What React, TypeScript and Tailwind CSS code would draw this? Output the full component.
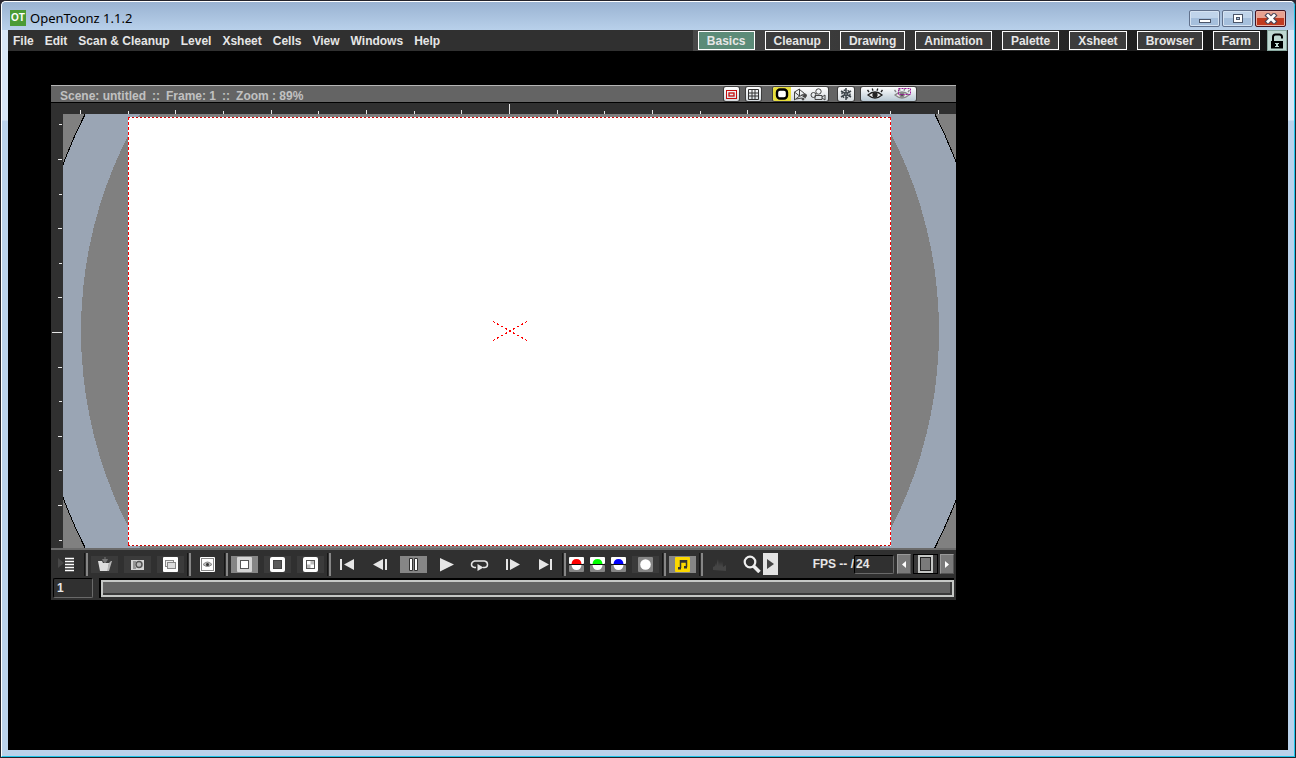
import React from "react";

const menus = ["File", "Edit", "Scan & Cleanup", "Level", "Xsheet", "Cells", "View", "Windows", "Help"];
const rooms = ["Basics", "Cleanup", "Drawing", "Animation", "Palette", "Xsheet", "Browser", "Farm"];
const sceneInfo = ["Scene: untitled", "::", "Frame: 1", "::", "Zoom : 89%"];

function Logo() {
  return (
    <span className="grid size-4 place-items-center overflow-hidden bg-[#4b9b35] font-['Liberation_Sans',sans-serif] text-[10px] leading-4 font-bold text-white">
      OT
    </span>
  );
}

function WindowButton({ label, close, children }: { label: string; close?: boolean; children: React.ReactNode }) {
  return (
    <button
      aria-label={label}
      className={
        close
          ? "grid h-[17px] w-[31px] place-items-center rounded-[2px] border border-[#431422] bg-linear-to-b from-[#e8a191] from-50% to-[#c03a20] to-50% shadow-[inset_0_0_0_1px_#e9b0a4]"
          : "grid h-[17px] w-[31px] place-items-center rounded-[2px] border border-[#61718c] bg-linear-to-b from-[#c0d4ea] from-50% to-[#a5bfdc] to-50% shadow-[inset_0_0_0_1px_#d5e3f2]"
      }
    >
      <svg width="14" height="11" viewBox="0 0 14 11">
        {children}
      </svg>
    </button>
  );
}

function TitleBar() {
  return (
    <header className="flex h-[28px] shrink-0 items-start bg-linear-to-b from-[#9ab3d2] to-[#b8d0ea] pr-2 pl-2">
      <div className="flex items-center gap-1 pt-2">
        <Logo />
        <h1 className="font-['Noto_Sans',sans-serif] text-[13px] leading-4 text-black">OpenToonz 1.1.2</h1>
      </div>
      <div className="ml-auto flex gap-[2px] pt-2">
        <WindowButton label="Minimize">
          <rect x="1.5" y="6.5" width="11" height="3" fill="#fff" stroke="#4b5568" />
        </WindowButton>
        <WindowButton label="Maximize">
          <rect x="2.5" y="1.5" width="9" height="8" fill="#fff" stroke="#4b5568" />
          <rect x="5.5" y="4.5" width="3" height="2" fill="#a8bfdb" stroke="#4b5568" />
        </WindowButton>
        <WindowButton label="Close" close>
          <path d="M4 2.500l6 6M10 2.500l-6 6" stroke="#4b4558" strokeWidth="5" strokeLinecap="square" />
          <path d="M4 2.500l6 6M10 2.500l-6 6" stroke="#fff" strokeWidth="2.800" strokeLinecap="square" />
        </WindowButton>
      </div>
    </header>
  );
}

function MenuBar() {
  return (
    <div className="flex h-[21px] shrink-0 items-stretch bg-[#303030] text-[12px] font-bold text-[#e6e6e6]">
      <nav className="flex items-center gap-[11px] pl-[5px]">
        {menus.map((m) => (
          <button key={m} className="whitespace-nowrap">
            {m}
          </button>
        ))}
      </nav>
      <nav className="ml-auto flex items-center gap-[10px] bg-linear-to-r from-[#484848] to-[#141414] pr-[7px] pl-[5px]">
        {rooms.map((r, i) => (
          <button
            key={r}
            className={
              i === 0
                ? "h-[19px] border border-white bg-[#5c8b78] px-2 pt-px leading-4"
                : "h-[19px] border border-white bg-[#3c3c3c] px-2 pt-px leading-4"
            }
          >
            {r}
          </button>
        ))}
      </nav>
      <button aria-label="Lock rooms" className="mr-px grid w-5 place-items-center border border-[#88a89f] bg-[#bfd8d1]">
        <svg width="14" height="16" viewBox="0 0 14 16">
          <path d="M3 8V4q0-2.500 2.500-2.500h4q2.500 0 2.500 2.500v1.500" fill="none" stroke="#000" strokeWidth="2" />
          <rect x="1" y="8" width="12" height="7.500" fill="#000" />
          <path d="M5 10h4v1h-1v2h1v1H5v-1h1v-2H5z" fill="#bfd8d1" />
        </svg>
      </button>
    </div>
  );
}

const chip = "grid h-[14px] place-items-center rounded-[2px] bg-linear-to-b from-white to-[#d4dade] shadow-[0_0_0_1px_#3d3d3d]";

function Eye({ dim }: { dim?: boolean }) {
  return (
    <svg width="22" height="14" viewBox="0 0 22 14">
      <g stroke={dim ? "#888" : "#222"} fill="none" strokeWidth="1.300">
        <path d="M4 8q7-6 14 0q-7 6-14 0z" fill="#eee" />
        <path d="M5 5L3.500 3M9 3.800L8.200 1.500M13 3.800l.8-2.300M17 5l1.500-2" />
        <circle cx="11" cy="8" r="2" fill={dim ? "#555" : "#222"} />
      </g>
      {dim && <rect x="7.500" y="1.500" width="12" height="6" fill="none" stroke="#a0189c" strokeDasharray="2 1" />}
    </svg>
  );
}

function ViewerTitle() {
  return (
    <div className="flex h-[18px] items-center border-t border-b border-t-[#b5b5b5] border-b-black bg-[#646464] pl-[9px]">
      <h2 className="flex gap-[6px] pt-[3px] text-[12px] leading-4 font-bold whitespace-nowrap text-[#c1c1c1]">
        {sceneInfo.map((part, i) => (
          <span key={i}>{part}</span>
        ))}
      </h2>
      <div className="ml-auto flex items-center pr-[40px]">
        <button aria-label="Safe area" className={`${chip} w-[15px]`}>
          <svg width="11" height="9" viewBox="0 0 11 9" fill="none" stroke="#c40d0d">
            <rect x=".5" y=".5" width="10" height="8" />
            <rect x="3" y="3" width="5" height="3" strokeWidth="1.300" />
          </svg>
        </button>
        <button aria-label="Field guide" className={`${chip} ml-[7px] w-[15px]`}>
          <svg width="11" height="11" viewBox="0 0 11 11" fill="none" stroke="#333">
            <path d="M.5.5h10v10H.5zM4 0v11M7 0v11M0 4h11M0 7h11" />
          </svg>
        </button>
        <div className="ml-3 flex overflow-hidden rounded-[2px] bg-linear-to-b from-white to-[#d4dade] shadow-[0_0_0_1px_#3d3d3d]">
          <button aria-label="Camera stand view" className="grid h-[14px] w-[18px] place-items-center bg-[#e8de3c]">
            <svg width="14" height="12" viewBox="0 0 14 12">
              <rect x="2" y="1.500" width="10" height="9" rx="3" fill="#fff" stroke="#000" strokeWidth="2.400" />
            </svg>
          </button>
          <button aria-label="3D view" className="grid h-[14px] w-[18px] place-items-center">
            <svg width="16" height="13" viewBox="0 0 16 13" fill="none" stroke="#444">
              <path d="M2.500 12V4l5-3v7zM7.500 1.500l5 4-5 3M2.500 4l5 4M4 11l6-1M9 7l5 3" />
              <circle cx="13" cy="7.500" r="1.500" fill="#444" />
              <circle cx="11" cy="11" r="1" fill="#444" />
            </svg>
          </button>
          <button aria-label="Camera view" className="grid h-[14px] w-[19px] place-items-center">
            <svg width="17" height="13" viewBox="0 0 17 13" fill="none" stroke="#444">
              <circle cx="3.500" cy="7" r="2.500" />
              <circle cx="8.500" cy="3.500" r="2.700" />
              <path d="M5 7.500h7v4H5zM12 9l3-2v5l-3-2" />
            </svg>
          </button>
        </div>
        <button aria-label="Freeze" className={`${chip} ml-[10px] w-4`}>
          <svg width="12" height="12" viewBox="0 0 12 12" fill="none" stroke="#3c444a" strokeWidth="1.500">
            <path d="M6 0v12M1 3l10 6M11 3L1 9" />
            <circle cx="6" cy="6" r="4" strokeDasharray="2 2" />
            <circle cx="6" cy="6" r="1.300" fill="#fff" />
          </svg>
        </button>
        <div className="ml-[7px] flex rounded-[2px] bg-linear-to-b from-white to-[#b9c9d4] shadow-[0_0_0_1px_#3d3d3d]">
          <button aria-label="Preview" className="grid h-[14px] w-[27px] place-items-center">
            <Eye />
          </button>
          <button aria-label="Sub-camera preview" className="grid h-[14px] w-[28px] place-items-center">
            <Eye dim />
          </button>
        </div>
      </div>
    </div>
  );
}

const xTicks = Array.from({ length: 19 }, (_, i) => i - 9);
const yTicks = Array.from({ length: 13 }, (_, i) => i - 6);

function Stage() {
  return (
    <div className="grid grid-cols-[12px_minmax(0,1fr)] grid-rows-[11px_434px] bg-[#303030]">
      <span />
      <svg className="h-[11px] w-full" viewBox="0 0 893 11" preserveAspectRatio="xMidYMid slice" shapeRendering="crispEdges">
        {xTicks.map((t) => {
          const h = t === 0 ? 10 : t % 2 === 0 ? 3 : 4;
          return <rect key={t} x={Math.round(446 + t * 47.65)} y={11 - h} width="1" height={h} fill="#e6e6e6" />;
        })}
      </svg>
      <svg className="h-[434px] w-3" viewBox="0 0 12 434" shapeRendering="crispEdges">
        {yTicks.map((t) => {
          const w = t === 0 ? 10 : t % 2 === 0 ? 3 : 4;
          return <rect key={t} x={11 - w} y={Math.round(218 + t * 34.6)} width={w} height="1" fill="#e6e6e6" />;
        })}
      </svg>
      <svg
        className="h-[434px] w-full bg-[#808080]"
        viewBox="0 0 893 434"
        preserveAspectRatio="xMidYMid slice"
        role="img"
        aria-label="Stage"
      >
        <g shapeRendering="crispEdges">
          <circle cx="447" cy="217" r="477" fill="#9aa5b4" stroke="#000" />
          <circle cx="447" cy="217" r="429" fill="#808080" />
          <rect x="65" y="3" width="763" height="429" fill="#fff" />
        </g>
        <path d="M65 3.500h763M65 431.500h763" stroke="#d00000" strokeDasharray="2 2" />
        <path d="M65.500 3v429M827.500 3v429" stroke="#f00" strokeDasharray="3 2" />
        <path d="M430 207.500l34 19M430 226.500l34-19" stroke="#f00" strokeDasharray="2.300 2.300" shapeRendering="crispEdges" />
      </svg>
    </div>
  );
}

function Tool({ label, active, plain, small, children }: { label: string; active?: boolean; plain?: boolean; small?: boolean; children: React.ReactNode }) {
  const base = small
    ? "mx-[3px] grid h-[17px] w-[15px] shrink-0 place-items-center"
    : active
      ? "mx-[3px] grid h-[17px] w-[27px] shrink-0 place-items-center bg-[#868686]"
      : plain
        ? "mx-[3px] grid h-[17px] w-[27px] shrink-0 place-items-center"
        : "mx-[3px] grid h-[17px] w-[27px] shrink-0 place-items-center bg-[#3b3b3b]";
  return (
    <button aria-label={label} className={base}>
      <svg width={small ? 15 : 19} height="15" viewBox={small ? "0 0 15 15" : "0 0 19 15"}>
        {children}
      </svg>
    </button>
  );
}

function Sep() {
  return <span className="h-[23px] w-1 shrink-0 border-r-2 border-l border-r-[#868686] border-l-[#151515]" />;
}

function Channel({ label, color }: { label: string; color: string }) {
  return (
    <Tool label={label} small>
      <rect width="15" height="7" rx="1" fill="#fff" />
      <rect y="8" width="15" height="7" rx="1" fill="#868686" />
      <path d="M2.500 7q.5-5 5-5t5 5z" fill={color} />
      <path d="M2.500 8q.5 5 5 5t5-5z" fill="#fff" />
      <path d="M0 7.500h15" stroke="#111" />
    </Tool>
  );
}

function Playback() {
  return (
    <div className="flex h-[28px] items-center">
      <div className="flex items-center">
        <Tool label="Options" plain>
          <path d="M0 1l6 5-6 5z" fill="#484848" />
          <path d="M7 1h9v2H7zM7 4h9v2H7zM7 7h9v2H7zM7 10h9v2H7zM7 13h9v2H7z" fill="#bbb" />
          <path d="M7 2.500h9M7 5.500h9M7 8.500h9M7 11.500h9M7 14.500h9" stroke="#303030" />
          <path d="M7 1.500h9M7 4.500h9M7 7.500h9M7 10.500h9M7 13.500h9" stroke="#fff" strokeWidth="1.500" />
        </Tool>
        <Sep />
        <Tool label="Save">
          <path d="M3 4h4l1 2h6l-1 8H5z" fill="#ddd" />
          <path d="M14 6l2-2h1l-3 10h-2z" fill="#b5b5b5" />
          <path d="M10 0v5M7.500 2.500h5L10 6z" fill="#777" stroke="#777" />
        </Tool>
        <Tool label="Snapshot">
          <path d="M3 3h13v10H3z" fill="#d5d5d5" />
          <path d="M5 5h3M5 7h2M5 9h2M5 11h3" stroke="#555" />
          <circle cx="11" cy="7.500" r="3" fill="#bbb" stroke="#555" strokeWidth="1.500" />
        </Tool>
        <Tool label="Compare">
          <rect x="2" width="15" height="15" rx="1" fill="#fff" />
          <rect x="4.500" y="3.500" width="8" height="6" fill="#eee" stroke="#888" />
          <rect x="6.500" y="5.500" width="8" height="6" fill="#ddd" stroke="#888" />
        </Tool>
        <Sep />
        <Tool label="Define sub-camera" plain>
          <rect x="2" width="15" height="15" rx="1" fill="#fff" />
          <rect x="3.500" y="1.500" width="12" height="12" fill="none" stroke="#111" strokeDasharray="1 1" />
          <path d="M5 7.500q4.500-5 9 0q-4.500 4-9 0z" fill="#bbb" stroke="#888" />
          <circle cx="9.500" cy="7.500" r="1.500" fill="#333" />
        </Tool>
        <Sep />
        <Tool label="White background" active>
          <rect x="2" width="15" height="15" rx="1" fill="#d5d5d5" />
          <rect x="5.500" y="3.500" width="8" height="8" fill="#fff" stroke="#555" />
        </Tool>
        <Tool label="Black background">
          <rect x="2" width="15" height="15" rx="2" fill="#fff" />
          <rect x="5.500" y="3.500" width="8" height="8" fill="#5b5b5b" stroke="#444" />
        </Tool>
        <Tool label="Checkered background">
          <rect x="2" width="15" height="15" rx="2" fill="#fff" />
          <rect x="5.500" y="3.500" width="8" height="8" fill="#bbb" stroke="#555" />
          <path d="M6 4h3.500v3.500H6zM9.500 7.500H13V11H9.500z" fill="#fff" />
        </Tool>
        <Sep />
        <Tool label="First frame" plain>
          <path d="M2 2h2v11H2zM16 2v11L6 7.500z" fill="#e6e6e6" />
        </Tool>
        <Tool label="Previous frame" plain>
          <path d="M12 2v11L2 7.500zM14 2h2v11h-2z" fill="#e6e6e6" />
        </Tool>
        <Tool label="Pause" active>
          <path d="M5.500 1.500h3v12h-3zM10.500 1.500h3v12h-3z" fill="#fff" stroke="#333" />
        </Tool>
        <Tool label="Play" plain>
          <path d="M3 1v13.500L17 7.500z" fill="#e6e6e6" />
        </Tool>
        <Tool label="Loop" plain>
          <path d="M6 10.500H4.500q-3-.5-3-3t3-3.500h10q3 .5 3 3.500t-3 3H13" fill="none" stroke="#e6e6e6" strokeWidth="1.500" />
          <path d="M7.500 7v7l6-3.500z" fill="#e6e6e6" />
        </Tool>
        <Tool label="Next frame" plain>
          <path d="M3 2h2v11H3zM7 2v11l10-5.500z" fill="#e6e6e6" />
        </Tool>
        <Tool label="Last frame" plain>
          <path d="M3 2v11l10-5.500zM14 2h2v11h-2z" fill="#e6e6e6" />
        </Tool>
        <Sep />
        <Channel label="Red channel" color="#f00" />
        <Channel label="Green channel" color="#0f0" />
        <Channel label="Blue channel" color="#00f" />
        <Tool label="Alpha channel">
          <rect x="2" width="15" height="15" rx="1" fill="#868686" />
          <circle cx="9.500" cy="7.500" r="5.300" fill="#fff" />
        </Tool>
        <Sep />
        <Tool label="Sound" active>
          <rect x="2" width="15" height="15" rx="1" fill="#fcd800" />
          <path d="M7.500 11V3.800h6V10M7.500 5h6" fill="none" stroke="#333" strokeWidth="1.500" />
          <path d="M5 10h3v2.500H5zM11 9h3v2.500h-3z" fill="#333" />
        </Tool>
        <Sep />
        <Tool label="Histogram" plain>
          <path d="M3 13v-3l2-1V6l1 3 2-7 1 7 1-5 1 5 1-5 1 6 3-2v6z" fill="#454545" />
        </Tool>
        <button aria-label="Locator" className="ml-1 grid h-[22px] w-[23px] place-items-center">
          <svg width="18" height="18" viewBox="0 0 18 18">
            <circle cx="7" cy="7" r="5.300" fill="none" stroke="#eee" strokeWidth="2.200" />
            <path d="M10.500 11l6 6" stroke="#eee" strokeWidth="3.500" />
          </svg>
        </button>
        <button aria-label="More" className="grid h-[22px] w-[15px] place-items-center bg-[#e3e3e3]">
          <svg width="9" height="10" viewBox="0 0 9 10">
            <path d="M1 0v10l7-5z" fill="#444" />
          </svg>
        </button>
      </div>
      <div className="ml-auto flex items-center pr-[2px]">
        <label htmlFor="fps" className="text-[12px] leading-4 font-bold whitespace-pre text-[#e6e6e6]">
          FPS -- /
        </label>
        <input
          id="fps"
          defaultValue="24"
          className="h-[19px] w-10 rounded-[2px] border border-t-black border-r-[#6a6a6a] border-b-[#6a6a6a] border-l-black bg-[#303030] pl-px text-[12px] font-bold text-[#e6e6e6]"
        />
        <button aria-label="Slower" className="ml-[3px] grid h-5 w-[14px] place-items-center border border-t-[#999] border-r-[#555] border-b-[#555] border-l-[#999] bg-[#7a7a7a]">
          <svg width="4" height="7" viewBox="0 0 4 7">
            <path d="M4 0v7L0 3.500z" fill="#fff" />
          </svg>
        </button>
        <div className="mx-[2px] flex h-5 w-[25px] justify-center border border-black bg-[#3a3a3a]">
          <button aria-label="Speed" className="h-[18px] w-[15px] border-2 border-[#c5c7c5] bg-[#7a7a7a] shadow-[inset_0_0_0_1px_#222]" />
        </div>
        <button aria-label="Faster" className="grid h-5 w-[14px] place-items-center border border-t-[#999] border-r-[#555] border-b-[#555] border-l-[#999] bg-[#7a7a7a]">
          <svg width="4" height="7" viewBox="0 0 4 7">
            <path d="M0 0v7l4-3.500z" fill="#fff" />
          </svg>
        </button>
      </div>
    </div>
  );
}

function FrameBar() {
  return (
    <div className="flex h-[22px] items-start gap-[6px] px-[2px]">
      <input
        aria-label="Current frame"
        defaultValue="1"
        className="h-5 w-10 rounded-[2px] border border-t-black border-r-[#6a6a6a] border-b-[#6a6a6a] border-l-black bg-[#303030] pl-[3px] text-[12px] font-bold text-[#e6e6e6]"
      />
      <div className="flex h-5 grow border-t-2 border-l-2 border-black">
        <button
          aria-label="Frame range"
          className="h-[17px] grow border-2 border-[#c5c7c5] bg-[#646464] shadow-[inset_-1px_-1px_0_1px_#3a3a3a]"
        />
      </div>
    </div>
  );
}

export default function App() {
  return (
    <div className="min-h-screen bg-[#2b2630] font-['Liberation_Sans',Arial,sans-serif]">
      <div className="flex min-h-screen flex-col rounded-t-[6px] border border-[#23232b] bg-[#bad2eb]">
        <div className="flex grow flex-col overflow-hidden rounded-t-[5px] border border-white border-r-[#1fc4ea] border-b-[#1fc4ea]">
          <TitleBar />
          <div className="flex grow flex-col bg-linear-to-b from-[#d9e7f6] from-[90px] to-[#bad2eb] to-[91px] px-[6px] pb-[6px]">
            <MenuBar />
            <main className="grow bg-black">
              <section className="mt-[34px] mr-[332px] ml-[43px] bg-[#303030]">
                <ViewerTitle />
                <Stage />
                <div className="border-t-2 border-t-[#6b6b6b]">
                  <Playback />
                  <FrameBar />
                </div>
              </section>
            </main>
          </div>
        </div>
      </div>
    </div>
  );
}
